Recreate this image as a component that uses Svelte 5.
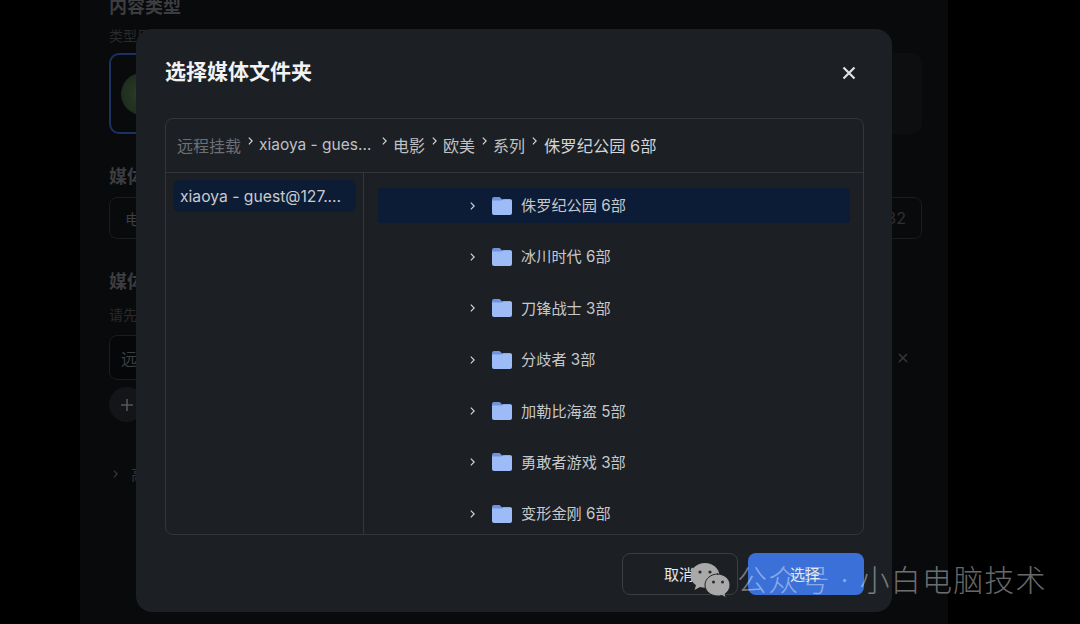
<script lang="ts">
	const crumbs = ['xiaoya - guest@127.0.0.1', '电影', '欧美', '系列', '侏罗纪公园 6部'];
	const folders = [
		'侏罗纪公园 6部',
		'冰川时代 6部',
		'刀锋战士 3部',
		'分歧者 3部',
		'加勒比海盗 5部',
		'勇敢者游戏 3部',
		'变形金刚 6部'
	];
</script>

<div class="screen">
	<main class="page">
		<h3 class="first">内容类型</h3>
		<p class="hint top">类型用于决定刮削方式</p>
		<div class="types">
			<div class="type active"><span class="orb"></span></div>
			<div class="type"></div>
		</div>

		<h3>媒体库名称</h3>
		<div class="field">电影<span class="count">32</span></div>

		<h3>媒体文件夹</h3>
		<p class="hint">请先选择存储，再添加文件夹</p>
		<div class="folder-field">
			<div class="field tall">远程挂载</div>
			<svg class="remove" viewBox="0 0 12 12" width="12" height="12">
				<path d="M2 2l8 8M10 2l-8 8" />
			</svg>
		</div>
		<div class="add">
			<svg viewBox="0 0 14 14" width="14" height="14"><path d="M7 1v12M1 7h12" /></svg>
		</div>

		<div class="advanced">
			<svg viewBox="0 0 8 12" width="7" height="10"><path d="M2 2l4 4-4 4" /></svg>
			<span>高级设置</span>
		</div>
	</main>

	<div class="dialog" role="dialog" aria-modal="true" aria-labelledby="dialog-title">
		<header class="dialog-head">
			<h2 id="dialog-title">选择媒体文件夹</h2>
			<button class="close" aria-label="关闭">
				<svg viewBox="0 0 14 14" width="14" height="14"><path d="M1.5 1.5l11 11M12.5 1.5l-11 11" /></svg>
			</button>
		</header>

		<section class="browser">
			<nav class="crumbs">
				<span class="crumb root">远程挂载</span>
				{#each crumbs as crumb}
					<svg class="sep" viewBox="0 0 8 12" width="7" height="10"><path d="M2 2l4 4-4 4" /></svg>
					<span class="crumb" class:long={crumb.length > 10}>{crumb}</span>
				{/each}
			</nav>
			<div class="panes">
				<aside class="mounts">
					<div class="mount">xiaoya - guest@127.0.0.1</div>
				</aside>
				<div class="list">
					{#each folders as name, i}
						<div class="row" class:selected={i === 0}>
							<svg class="arrow" viewBox="0 0 8 12" width="7" height="10"><path d="M2 2l4 4-4 4" /></svg>
							<svg class="folder" viewBox="0 0 20 18" width="20" height="18">
								<path class="folder-back" d="M0 2a2 2 0 0 1 2-2h5.500l2.500 2.200h8a2 2 0 0 1 2 2V5H0z" />
								<path class="folder-front" d="M0 3.400h9.600l2-1.200H18a2 2 0 0 1 2 2V16a2 2 0 0 1-2 2H2a2 2 0 0 1-2-2z" />
							</svg>
							<span>{name}</span>
						</div>
					{/each}
				</div>
			</div>
		</section>

		<footer class="actions">
			<button class="btn ghost">取消</button>
			<button class="btn primary">选择</button>
		</footer>
	</div>

	<div class="watermark">
		<svg viewBox="0 0 42 35" width="42" height="35">
			<path class="bubble" d="M15 0C7 0 .5 5.700 .5 12.600c0 4 2.100 7.300 5.500 9.600L4.500 27l5.600-2.900c1.600.4 3.200.7 4.900.7 8 0 14.500-5.500 14.500-12.200S23 0 15 0z" />
			<circle class="eye" cx="10" cy="9" r="1.600" />
			<circle class="eye" cx="20" cy="9" r="1.600" />
			<path class="bubble outlined" d="M28 11c-7.200 0-13 4.800-13 11s5.800 11 13 11c1.300 0 2.600-.2 3.900-.6l4.300 2.300-1.100-3.800c3-2 4.900-5.200 4.900-8.900 0-6.200-5.800-11-13-11z" />
			<circle class="eye" cx="23.500" cy="19" r="1.500" />
			<circle class="eye" cx="32.500" cy="19" r="1.500" />
		</svg>
		<span>公众号 · 小白电脑技术</span>
	</div>
</div>

<style>
	:global(body) {
		margin: 0;
		background: #000;
		font-family: Inter, 'Noto Sans CJK SC', sans-serif;
	}

	.screen {
		position: relative;
		width: 1080px;
		height: 624px;
		overflow: hidden;
		background: #000;
	}

	.page {
		box-sizing: border-box;
		width: 868px;
		height: 624px;
		margin-left: 80px;
		padding: 0 26px 0 29px;
		background: #090a0c;
		color: #3d3e41;
		overflow: hidden;
	}

	h3 {
		margin: 0;
		font-size: 18px;
		line-height: 26px;
		font-weight: 700;
		color: #3c3d40;
	}

	h3.first {
		margin-top: -6px;
	}

	.hint {
		margin: 10px 0 0;
		font-size: 14px;
		line-height: 20px;
		color: #2a2b2e;
	}

	.hint.top {
		margin-top: 6px;
	}

	.types {
		display: grid;
		grid-template-columns: 1fr 1fr;
		gap: 16px;
		margin-top: 7px;
	}

	.type {
		height: 81px;
		box-sizing: border-box;
		display: flex;
		align-items: center;
		padding-left: 10px;
		border-radius: 10px;
		background: #0d0e10;
	}

	.type.active {
		background: #090a0c;
		border: 2px solid #1a325f;
	}

	.orb {
		width: 42px;
		height: 42px;
		border-radius: 50%;
		background: radial-gradient(circle, #34462f 0, #263724 30%, #1a261a 100%);
	}

	.types + h3 {
		margin-top: 30px;
	}

	.field {
		box-sizing: border-box;
		display: flex;
		align-items: center;
		justify-content: space-between;
		height: 42px;
		margin-top: 7px;
		padding: 0 15px;
		border: 1px solid #1b1c1f;
		border-radius: 8px;
		font-size: 15px;
		color: #3d3e41;
	}

	.count {
		font-size: 16px;
		color: #2f3033;
	}

	.field + h3 {
		margin-top: 30px;
	}

	.folder-field {
		display: flex;
		align-items: center;
		gap: 5px;
		margin-top: 10px;
	}

	.field.tall {
		flex: 1;
		height: 45px;
		margin: 0;
		padding: 0 11px;
		background: #060708;
		font-size: 16px;
	}

	.remove {
		flex: none;
		margin-right: 13px;
	}

	.remove path {
		fill: none;
		stroke: #36373b;
		stroke-width: 1.5;
	}

	.add {
		display: flex;
		align-items: center;
		justify-content: center;
		width: 35px;
		height: 35px;
		margin-top: 7px;
		border-radius: 50%;
		background: #141518;
	}

	.add path {
		fill: none;
		stroke: #55565a;
		stroke-width: 1.6;
	}

	.advanced {
		display: flex;
		align-items: center;
		gap: 12px;
		margin-top: 41px;
		padding-left: 3px;
		font-size: 15px;
		color: #35363a;
	}

	.advanced path {
		fill: none;
		stroke: #3a3b3f;
		stroke-width: 1.4;
	}

	.dialog {
		position: absolute;
		left: 136px;
		top: 29px;
		box-sizing: border-box;
		display: flex;
		flex-direction: column;
		width: 756px;
		height: 583px;
		padding: 0 28px 17px 29px;
		border-radius: 16px;
		background: #1c1f24;
	}

	.dialog-head {
		display: flex;
		align-items: center;
		justify-content: space-between;
		height: 89px;
		flex: none;
		padding-bottom: 8px;
		box-sizing: border-box;
	}

	h2 {
		margin: 0;
		font-size: 21px;
		font-weight: 700;
		color: #f1f2f3;
	}

	.close {
		display: flex;
		margin: 6px 8px 0 0;
		padding: 0;
		border: 0;
		background: none;
	}

	.close path {
		fill: none;
		stroke: #dfe1e4;
		stroke-width: 2.2;
	}

	.browser {
		display: flex;
		flex-direction: column;
		height: 417px;
		flex: none;
		box-sizing: border-box;
		border: 1px solid #33363b;
		border-radius: 8px;
		overflow: hidden;
	}

	.crumbs {
		display: flex;
		align-items: center;
		flex: none;
		gap: 5px;
		box-sizing: border-box;
		height: 54px;
		padding: 0 11px 2px;
		border-bottom: 1px solid #33363b;
		font-size: 16px;
		color: #bfc1c5;
	}

	.crumb {
		flex: none;
		margin-right: 1px;
		white-space: nowrap;
	}

	.crumb.long {
		max-width: 114px;
		margin-right: 3px;
		font-size: 15.5px;
		overflow: hidden;
		text-overflow: ellipsis;
	}

	.crumb:last-child {
		margin-left: 1px;
		font-size: 16.3px;
		color: #d3d5d8;
	}

	.crumb.root {
		color: #6c6f74;
	}

	.sep {
		flex: none;
		margin-bottom: 8px;
	}

	.sep path,
	.arrow path {
		fill: none;
		stroke: #d5d7da;
		stroke-width: 1.4;
	}

	.panes {
		display: flex;
		flex: 1;
		min-height: 0;
	}

	.mounts {
		box-sizing: border-box;
		flex: none;
		width: 198px;
		padding: 7px 7px 0;
		border-right: 1px solid #33363b;
	}

	.mount {
		box-sizing: border-box;
		height: 32px;
		line-height: 33px;
		padding: 0 12px 0 7px;
		border-radius: 6px;
		background: #0d1c35;
		font-size: 15.7px;
		color: #c9cbce;
		white-space: nowrap;
		overflow: hidden;
		text-overflow: ellipsis;
	}

	.list {
		display: flex;
		flex: 1;
		flex-direction: column;
		gap: 16.4px;
		padding: 15px 13px 0 14px;
		overflow: hidden;
	}

	.row {
		display: flex;
		align-items: center;
		flex: none;
		height: 35px;
		padding-left: 91px;
		border-radius: 4px;
		font-size: 15.2px;
		color: #c6c8cb;
	}

	.row span {
		margin-bottom: 3px;
	}

	.row.selected {
		background: #0c1c36;
	}

	.arrow {
		flex: none;
		margin-right: 16px;
	}

	.folder {
		flex: none;
		margin-right: 9px;
	}

	.folder-back {
		fill: #6f93dd;
	}

	.folder-front {
		fill: #9dbcf7;
	}

	.actions {
		display: flex;
		justify-content: flex-end;
		gap: 10px;
		margin-top: 18px;
	}

	.btn {
		width: 116px;
		height: 42px;
		padding: 0 2px 2px 0;
		border-radius: 8px;
		font-family: inherit;
		font-size: 15px;
		color: #e6e7e9;
	}

	.ghost {
		border: 1px solid #3a3d42;
		background: transparent;
	}

	.primary {
		border: 0;
		background: #3a70d8;
	}

	/* 水印盖在最上层 */
	.watermark {
		position: absolute;
		left: 690px;
		top: 562px;
		display: flex;
		align-items: center;
		gap: 5px;
		height: 36px;
		white-space: nowrap;
		pointer-events: none;
	}

	.watermark span {
		font-size: 30px;
		font-weight: 300;
		letter-spacing: 1.2px;
		color: rgba(255, 255, 255, 0.42);
		margin-top: -4px;
	}

	.bubble {
		fill: #a9a9a9;
	}

	.bubble.outlined {
		stroke: #232427;
		stroke-width: 1;
	}

	.eye {
		fill: #2a2b2e;
	}
</style>
